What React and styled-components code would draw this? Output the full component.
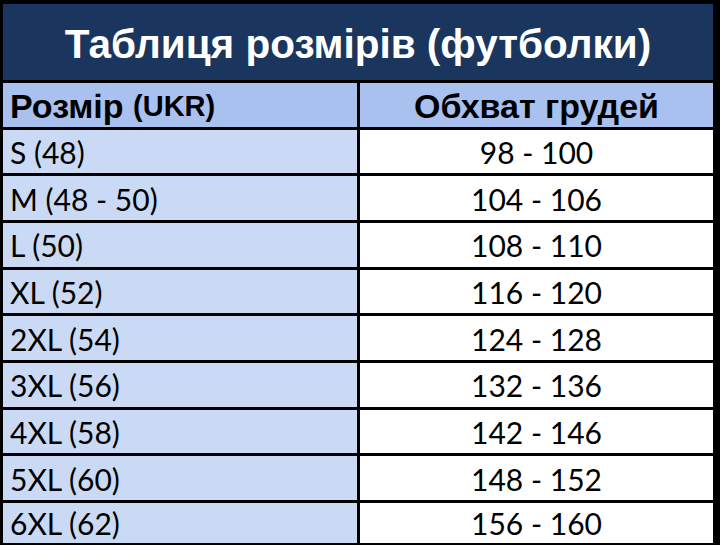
import React from 'react';
import styled, { createGlobalStyle } from 'styled-components';

const rows = [
  ['S (48)', '98 - 100'],
  ['M (48 - 50)', '104 - 106'],
  ['L (50)', '108 - 110'],
  ['XL (52)', '116 - 120'],
  ['2XL (54)', '124 - 128'],
  ['3XL (56)', '132 - 136'],
  ['4XL (58)', '142 - 146'],
  ['5XL (60)', '148 - 152'],
  ['6XL (62)', '156 - 160'],
];

const Global = createGlobalStyle`
  html, body {
    margin: 0;
    padding: 0;
    background: #000;
    overflow: hidden;
  }
`;

const Sheet = styled.div`
  width: 720px;
  height: 545px;
  box-sizing: border-box;
  padding: 4px 7px 0 3px;
  background: #000;
  overflow: hidden;
`;

const Grid = styled.div`
  display: grid;
  grid-template-columns: 354px 353px;
  grid-template-rows: 76px repeat(9, 43.67px) 40px;
  gap: 3px;
`;

const Title = styled.div`
  grid-column: 1 / span 2;
  background: #1a365f;
  color: #fff;
  display: flex;
  align-items: center;
  justify-content: center;
  font-family: 'Liberation Sans', Arial, sans-serif;
  font-weight: 700;
  font-size: 40.5px;
  padding-top: 4px;
  box-sizing: border-box;
`;

const Cell = styled.div`
  display: flex;
  align-items: center;
  justify-content: ${p => (p.$center ? 'center' : 'flex-start')};
  padding: ${p => (p.$center ? '0' : '0 0 0 7px')};
  padding-top: ${p => (p.$head ? '3px' : '1px')};
  box-sizing: border-box;
  color: #000;
  background: ${p => (p.$head ? '#a9c1ef' : p.$center ? '#fff' : '#cbdaf4')};
  font-family: ${p => (p.$head ? "'Liberation Sans', Arial" : 'Lato')}, sans-serif;
  font-weight: ${p => (p.$head ? 700 : 400)};
  font-size: ${p => (p.$head ? '34px' : '30px')};
  white-space: pre;
`;

const Small = styled.span`
  font-size: 29px;
`;

export default function App() {
  return (
    <Sheet>
      <Global />
      <Grid>
        <Title>Таблиця розмірів (футболки)</Title>
        <Cell $head>Розмір <Small>(UKR)</Small></Cell>
        <Cell $head $center>Обхват грудей</Cell>
        {rows.map(([size, chest]) => (
          <React.Fragment key={size}>
            <Cell>{size}</Cell>
            <Cell $center>{chest}</Cell>
          </React.Fragment>
        ))}
      </Grid>
    </Sheet>
  );
}
